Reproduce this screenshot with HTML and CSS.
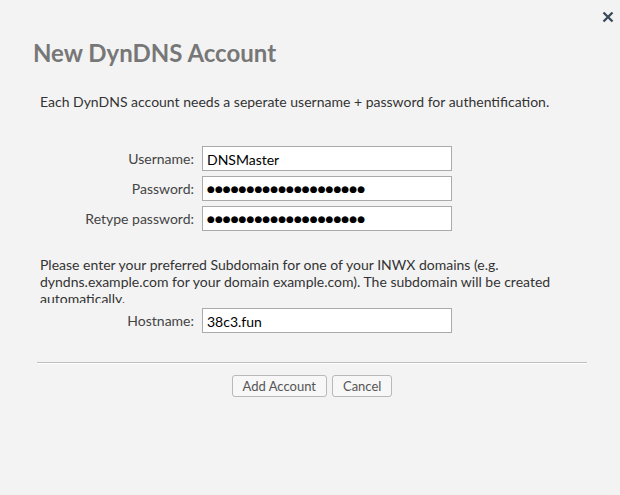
FILE: index.html
```html
<!DOCTYPE html>
<html>
<head>
<meta charset="utf-8">
<link rel="stylesheet" href="styles.css">
</head>
<body>
<div class="modal">
  <button class="close" aria-label="Close">
    <svg width="12" height="12" viewBox="0 0 12 12"><path d="M1.5 1.5 L10.5 10.5 M10.5 1.5 L1.5 10.5" stroke="#3d4b5c" stroke-width="2.4" fill="none"/></svg>
  </button>
  <h1 class="title">New DynDNS Account</h1>
  <div class="content">
    <p class="intro">Each DynDNS account needs a seperate username + password for authentification.</p>
    <div class="form">
      <label class="lbl">Username:</label>
      <input class="field" type="text" value="DNSMaster">
      <label class="lbl">Password:</label>
      <input class="field dots" type="text" value="●●●●●●●●●●●●●●●●●●●●">
      <label class="lbl">Retype password:</label>
      <input class="field dots" type="text" value="●●●●●●●●●●●●●●●●●●●●">
    </div>
    <p class="hint">Please enter your preferred Subdomain for one of your INWX domains (e.g. dyndns.example.com for your domain example.com). The subdomain will be created automatically.</p>
    <div class="form form-host">
      <label class="lbl">Hostname:</label>
      <input class="field" id="host" type="text" value="38c3.fun">
    </div>
    <hr class="sep">
    <div class="actions">
      <button class="btn">Add Account</button>
      <button class="btn">Cancel</button>
    </div>
  </div>
</div>
<script src="script.js"></script>
</body>
</html>
```
FILE: script.js
```js
var h = document.getElementById('host');
h.focus();
h.setSelectionRange(h.value.length, h.value.length);
```
FILE: styles.css
```css
html, body {
  margin: 0;
  padding: 0;
  background: #f3f3f3;
  height: 100%;
}
body {
  font-family: Lato, "Open Sans", sans-serif;
  font-size: 14px;
  color: #333;
}
.modal {
  position: relative;
  padding: 39px 33px 0 33px;
}
.close {
  position: absolute;
  top: 11px;
  right: 6px;
  border: 0;
  background: none;
  padding: 0;
  width: 12px;
  height: 12px;
  line-height: 0;
  cursor: pointer;
}
.title {
  margin: 0;
  font-size: 24px;
  line-height: 28px;
  font-weight: 700;
  color: #777;
}
.content {
  padding: 0 0 0 4px;
}
.intro {
  margin: 26px 0 0 3px;
  line-height: 17px;
}
.form {
  display: grid;
  grid-template-columns: 157px 250px;
  column-gap: 8px;
  row-gap: 5px;
  margin-top: 36px;
  align-items: center;
}
.lbl {
  text-align: right;
  color: #444;
  font-size: 14px;
}
.field {
  box-sizing: border-box;
  width: 250px;
  height: 25px;
  margin: 0;
  border: 1px solid #aaa;
  background: #fff;
  padding: 1px 4px 0 4px;
  font-family: Lato, sans-serif;
  font-size: 14px;
  color: #000;
  outline: none;
}
.dots {
  font-family: "DejaVu Sans", sans-serif;
  font-size: 9px;
  letter-spacing: 0.05px;
}
.hint {
  margin: 25px 0 0 3px;
  width: 530px;
  line-height: 17px;
  height: 47px;
  overflow: hidden;
}
.form-host {
  margin-top: 5px;
}
.sep {
  margin: 29px 0 0 0;
  border: 0;
  border-top: 1px solid #bdbdbd;
  border-bottom: 1px solid #fff;
  height: 0;
}
.actions {
  display: flex;
  justify-content: center;
  gap: 5px;
  margin-top: 11px;
}
.btn {
  font-family: Lato, sans-serif;
  font-size: 13px;
  color: #555;
  background: #f7f7f7;
  border: 1px solid #b9b9b9;
  border-radius: 3px;
  height: 22px;
  padding: 0 10px;
}
```
